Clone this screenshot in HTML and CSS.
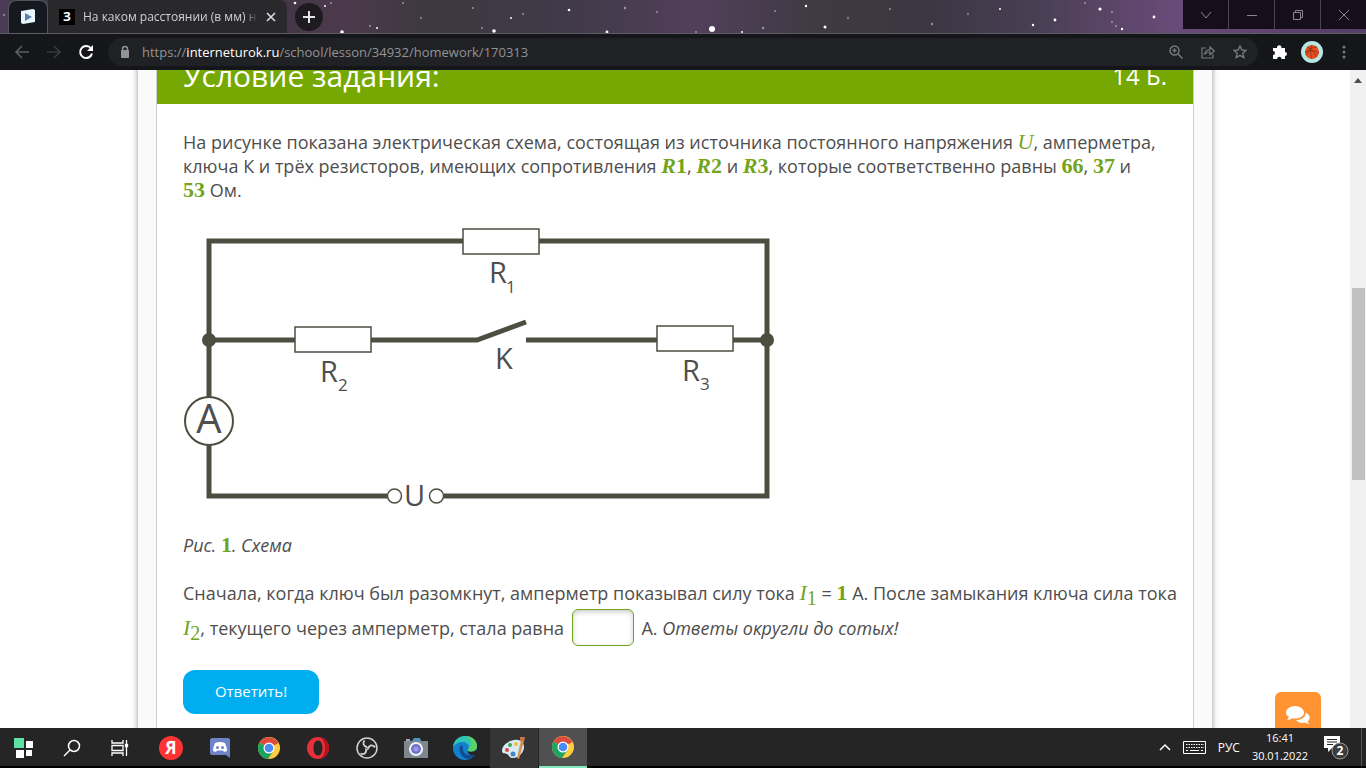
FILE: index.html
```html
<!DOCTYPE html>
<html lang="ru">
<head>
  <meta charset="UTF-8">
  <meta name="viewport" content="width=device-width, initial-scale=1.0">
  <title>Условие задания</title>
  <link rel="stylesheet" href="styles.css">
</head>
<body>

  <!-- tabs -->
  <header class="titlebar">
    <svg class="stars" viewBox="0 0 1366 33" preserveAspectRatio="xMidYMid slice" aria-hidden="true">
      <g fill="#fff">
        <circle cx="712" cy="29" r="3"/><circle cx="569" cy="10" r="1.3"/><circle cx="494" cy="31" r="1.8"/>
        <circle cx="511" cy="18" r="1"/><circle cx="607" cy="32" r="1.4"/><circle cx="825" cy="27" r="1.5"/>
        <circle cx="806" cy="6" r="1.2"/><circle cx="742" cy="32" r="1"/><circle cx="1100" cy="9" r="1.6"/>
        <circle cx="1055" cy="20" r="1.4"/><circle cx="1033" cy="25" r="1.2"/><circle cx="1154" cy="17" r="1.4"/>
        <circle cx="1122" cy="29" r="1.2"/><circle cx="1000" cy="9" r="1"/><circle cx="342" cy="32" r="1.8"/>
        <circle cx="295" cy="3" r="1.3"/><circle cx="377" cy="28" r="1"/><circle cx="325" cy="6" r="1"/>
      </g>
      <g fill="#fff" opacity=".45">
        <circle cx="4" cy="15" r="1"/><circle cx="403" cy="3" r="1"/><circle cx="421" cy="18" r="1"/>
        <circle cx="473" cy="8" r="1"/><circle cx="523" cy="14" r="1"/><circle cx="482" cy="28" r="1"/>
        <circle cx="625" cy="8" r="1.2"/><circle cx="657" cy="12" r="1"/><circle cx="696" cy="32" r="1"/>
        <circle cx="763" cy="28" r="1.2"/><circle cx="775" cy="11" r="1"/><circle cx="848" cy="18" r="1"/>
        <circle cx="890" cy="9" r="1"/><circle cx="932" cy="24" r="1.2"/><circle cx="968" cy="14" r="1"/>
        <circle cx="1085" cy="3" r="1"/><circle cx="1112" cy="12" r="1"/><circle cx="1112" cy="22" r="1"/>
        <circle cx="1116" cy="26" r="1"/><circle cx="331" cy="3" r="1"/><circle cx="370" cy="26" r="1"/>
      </g>
    </svg>
    <button class="tab tab-active" type="button" aria-label="interneturok">
      <svg width="16" height="18" viewBox="0 0 16 18"><path d="M1 3l12-2 2 1v12l-12 2-2-1z" fill="#e6f6fc"/><path d="M5 5l7 4-7 4z" fill="#5b82a6"/></svg>
    </button>
    <button class="tab tab-second" type="button">
      <span class="tab-icon">З</span>
      <span class="tab-text">На каком расстоянии (в мм) нуж</span>
      <svg width="10" height="10" viewBox="0 0 10 10"><path d="M1 1l8 8M9 1l-8 8" stroke="#ddd" stroke-width="1.6"/></svg>
    </button>
    <button class="tab-new" type="button" aria-label="Новая вкладка">
      <svg width="14" height="14" viewBox="0 0 14 14"><path d="M7 1v12M1 7h12" stroke="#e4e4e4" stroke-width="2"/></svg>
    </button>
    <div class="win-buttons">
      <button type="button" aria-label="Вкладки"><svg width="12" height="12" viewBox="0 0 12 12"><path d="M1 3l5 6 5-6"/></svg></button>
      <button type="button" aria-label="Свернуть"><svg width="12" height="12" viewBox="0 0 12 12"><path d="M1 6.5h10"/></svg></button>
      <button type="button" aria-label="Развернуть"><svg width="12" height="12" viewBox="0 0 12 12"><path d="M1.500 3.500h7v7h-7zM3.500 3.500v-2h7v7h-2"/></svg></button>
      <button type="button" aria-label="Закрыть"><svg width="12" height="12" viewBox="0 0 12 12"><path d="M1 1l10 10M11 1L1 11"/></svg></button>
    </div>
  </header>

  <!-- address bar -->
  <nav class="toolbar">
    <button class="tool-btn" type="button" aria-label="Назад"><svg width="16" height="16" viewBox="0 0 16 16"><path d="M15 8H2M8 2L2 8l6 6" fill="none" stroke="#5b5c5f" stroke-width="1.700"/></svg></button>
    <button class="tool-btn" type="button" aria-label="Вперёд"><svg width="16" height="16" viewBox="0 0 16 16"><path d="M1 8h13M8 2l6 6-6 6" fill="none" stroke="#38393c" stroke-width="1.700"/></svg></button>
    <button class="tool-btn" type="button" aria-label="Обновить"><svg width="16" height="16" viewBox="0 0 16 16"><path d="M13 4.500A6 6 0 1 0 14 9.500" fill="none" stroke="#fff" stroke-width="2"/><path d="M15 1v6H9z" fill="#fff"/></svg></button>
    <div class="omnibox">
      <svg width="10" height="14" viewBox="0 0 10 14"><rect x="1" y="5" width="8" height="8" rx="1" fill="#929397"/><path d="M2.500 6V4a2.500 2.500 0 0 1 5 0v2" fill="none" stroke="#929397" stroke-width="1.500"/></svg>
      <div class="url" role="textbox" contenteditable="true" spellcheck="false" aria-label="Адресная строка">https://<span class="url-host">interneturok.ru</span>/school/lesson/34932/homework/170313</div>
      <button class="tool-btn" type="button" aria-label="Масштаб"><svg width="14" height="14" viewBox="0 0 14 14" fill="none" stroke="#77787c" stroke-width="1.500"><circle cx="5.500" cy="5.500" r="4.500"/><path d="M9 9l4.500 4.500M3.500 5.500h4M5.500 3.500v4"/></svg></button>
      <button class="tool-btn" type="button" aria-label="Поделиться"><svg width="14" height="14" viewBox="0 0 14 14" fill="none" stroke="#77787c" stroke-width="1.200"><path d="M5 3H1v10h11V9"/><path d="M3.500 9.500C4 6 6 4.800 9 4.800V2l4.300 4L9 9.600V7C6.500 7 5 7.500 3.500 9.500z"/></svg></button>
      <button class="tool-btn" type="button" aria-label="В закладки"><svg width="14" height="14" viewBox="0 0 14 14"><path d="M7 1l1.800 4 4.200.4-3.200 2.900 1 4.200L7 10.300l-3.800 2.200 1-4.200L1 5.400 5.200 5z" fill="none" stroke="#77787c" stroke-width="1.400"/></svg></button>
    </div>
    <button class="tool-btn" type="button" aria-label="Расширения"><svg width="16" height="16" viewBox="0 0 16 16"><path d="M1 4h4a2.300 2.300 0 1 1 4.500 0H13v4a2 2 0 1 1 0 4v3H9.500a2.200 2.200 0 0 0-4.400 0H1v-4a2 2 0 0 0 0-4z" fill="#fff"/></svg></button>
    <button class="tool-btn" type="button" aria-label="Профиль"><svg width="22" height="22" viewBox="0 0 22 22"><circle cx="11" cy="11" r="11" fill="#b5e8e3"/><circle cx="11" cy="11" r="7" fill="#ea4f1d"/><path d="M4 11c5-2 10-2 14 1M11 4c-2 4-2 9 0 14M6 6c5 2 8 6 9 10M5 14c2-5 6-8 11-8" fill="none" stroke="#792c18" stroke-width=".7"/></svg></button>
    <button class="tool-btn" type="button" aria-label="Меню"><svg width="4" height="16" viewBox="0 0 4 16" fill="#77787c"><circle cx="2" cy="3" r="1.500"/><circle cx="2" cy="8" r="1.500"/><circle cx="2" cy="13" r="1.500"/></svg></button>
  </nav>

  <!-- page -->
  <div class="window">
    <main class="page">
      <div class="sheet">
        <section class="task">
          <div class="task-head">
            <h1>Условие задания:</h1>
            <span>14 Б.</span>
          </div>
          <form class="task-body">
            <p>На рисунке показана электрическая схема, состоящая из источника постоянного напряжения <i class="math">U</i>, амперметра, ключа К и трёх резисторов, имеющих сопротивления <b class="math"><i>R</i>1</b>, <b class="math"><i>R</i>2</b> и <b class="math"><i>R</i>3</b>, которые соответственно равны <b class="math">66</b>, <b class="math">37</b> и <b class="math">53</b>&nbsp;Ом.</p>

            <svg class="scheme" viewBox="183 225 592 288" role="img" aria-label="Схема">
              <g fill="none" stroke="#4d4e40" stroke-width="5">
                <path d="M209 397V241h254M539 241h228v255H444M209 444v52h178"/>
                <path d="M209 340h86M371 340h106l49-18M526 340h131M733 340h34"/>
              </g>
              <g fill="#fff" stroke="#4d4e40" stroke-width="1.500">
                <rect x="463" y="229" width="76" height="25"/>
                <rect x="295" y="327" width="76" height="25"/>
                <rect x="657" y="326" width="76" height="25"/>
                <circle cx="209" cy="421" r="24" stroke-width="2"/>
                <circle cx="394.500" cy="496" r="7"/>
                <circle cx="436.500" cy="496" r="7"/>
              </g>
              <circle cx="209" cy="340" r="7" fill="#4d4e40"/>
              <circle cx="767" cy="340" r="7" fill="#4d4e40"/>
              <g class="scheme-text">
                <text x="489" y="283">R</text><text class="scheme-sub" x="506" y="293">1</text>
                <text x="320" y="382">R</text><text class="scheme-sub" x="338" y="391">2</text>
                <text x="682" y="381">R</text><text class="scheme-sub" x="700" y="390">3</text>
                <text x="495" y="369">K</text>
                <text x="404" y="506">U</text>
                <text class="scheme-big" x="209" y="433">A</text>
              </g>
            </svg>

            <p class="caption"><i>Рис. <b class="math math-digit">1</b>. Схема</i></p>

            <p class="question">Сначала, когда ключ был разомкнут, амперметр показывал силу тока <span class="math"><i>I</i><sub>1</sub></span> = <b class="math">1</b> А. После замыкания ключа сила тока <span class="math"><i>I</i><sub>2</sub></span>, текущего через амперметр, стала равна <input class="answer" type="text" aria-label="Сила тока, А"> А. <i>Ответы округли до сотых!</i></p>

            <button class="submit" type="button">Ответить!</button>
          </form>
        </section>
      </div>
    </main>
    <div class="scrollbar">
      <svg width="8" height="5" viewBox="0 0 8 5"><path d="M0 5l4-5 4 5z" fill="#505050"/></svg>
      <div class="thumb"></div>
    </div>
    <button class="chat" type="button" aria-label="Чат">
      <svg width="24" height="20" viewBox="0 0 24 20" fill="#fff"><path d="M9 1C4 1 0 4 0 7.500c0 2 1 3.500 3 4.600L1 15c2 0 4-.6 5-1.700 7 1 12-1.600 12-5.800C18 4 14 1 9 1z"/><path d="M19.500 7.500c.5 4.500-4 7.500-9.500 7.500 2 3 6 3.500 9 2.600 1 .9 3 1.400 4.500 1.400l-2-2.500c3.500-2.600 3-7-2-9z"/></svg>
    </button>
  </div>

  <!-- taskbar -->
  <footer class="taskbar">
    <div class="task-left">
      <button type="button" aria-label="Пуск"><svg width="20" height="20" viewBox="0 0 20 20"><path fill="#5de2a5" d="M0 0h10v10H0z"/><path fill="#fff" d="M12 3h7v7h-7zM2 12h8v8H2zM12 12h6v6h-6z"/></svg></button>
      <button type="button" aria-label="Поиск"><svg width="18" height="18" viewBox="0 0 18 18" fill="none" stroke="#fff" stroke-width="1.500"><circle cx="11" cy="7" r="5.500"/><path d="M7 11l-6 6"/></svg></button>
      <button type="button" aria-label="Представление задач"><svg width="18" height="16" viewBox="0 0 18 16" fill="none" stroke="#fff" stroke-width="1.300"><path d="M1 0v3h11V0M1 16v-3h11v3M1 5.500h11v5H1zM15.500 0v16"/><path d="M14.500 4.500h2v2h-2z" fill="#fff"/></svg></button>
    </div>
    <div class="task-apps">
      <button type="button" aria-label="Яндекс"><svg width="24" height="24" viewBox="0 0 24 24"><circle cx="12" cy="12" r="12" fill="#f33"/><text class="ya" x="12" y="18">Я</text></svg></button>
      <button type="button" aria-label="Discord"><svg width="20" height="20" viewBox="0 0 20 20"><path d="M2 0h16a2 2 0 0 1 2 2v18l-4-3H2a2 2 0 0 1-2-2V2a2 2 0 0 1 2-2z" fill="#6f83c8"/><path d="M5 5q5-2 10 0 2 4 2 8l-3 1-1-1.500H7L6 14l-3-1q0-4 2-8z" fill="#fff"/><circle cx="7.500" cy="9.500" r="1.500" fill="#6f83c8"/><circle cx="12.500" cy="9.500" r="1.500" fill="#6f83c8"/></svg></button>
      <button type="button" aria-label="Chrome"><svg width="22" height="22" viewBox="0 0 22 22"><circle cx="11" cy="11" r="11" fill="#ffcd40"/><path d="M11 11L1.500 5.500a11 11 0 0 1 19 .5z" fill="#dd4b3e"/><path d="M11 11L1.500 5.500A11 11 0 0 0 10 22l5.500-8z" fill="#1da462"/><circle cx="11" cy="11" r="5.500" fill="#fff"/><circle cx="11" cy="11" r="4.300" fill="#4a8af4"/></svg></button>
      <button type="button" aria-label="Opera"><svg width="22" height="22" viewBox="0 0 22 22"><path fill-rule="evenodd" d="M11 0a11 11 0 1 0 0 22 11 11 0 0 0 0-22zM11 3.500c3 0 4.500 3.500 4.500 7.500S14 18.500 11 18.500 6.500 15 6.500 11 8 3.500 11 3.500z" fill="#e8303a"/><path d="M11 0a11 11 0 0 1 0 22c5-1 7-5 7-11S16 1 11 0z" fill="#b5121d"/></svg></button>
      <button type="button" aria-label="OBS"><svg width="22" height="22" viewBox="0 0 22 22" fill="none" stroke="#d2d2d2"><circle cx="11" cy="11" r="10" stroke-width="1.500"/><path d="M11 10C7 9 6.500 6 8.500 3.500M12 12c1-4 5-5 7-1.500M10 12c1 4-2 6-5.500 4.500" stroke-width="1.800"/><circle cx="11" cy="11.500" r="1.300"/></svg></button>
      <button type="button" aria-label="Камера"><svg width="24" height="20" viewBox="0 0 24 20"><path d="M0 3h8l2-3h6l1 3h7v17H0z" fill="#7d878e"/><path d="M9 3l1.500-3h5L17 3z" fill="#4b95c4"/><path d="M2 1h4v2H2z" fill="#a0a9af"/><circle cx="12" cy="11" r="7" fill="#f4f4f8"/><circle cx="12" cy="11" r="5" fill="#6c74c9"/><circle cx="12" cy="11" r="2.500" fill="#a394e5"/></svg></button>
      <button type="button" aria-label="Edge"><svg width="24" height="24" viewBox="0 0 24 24"><circle cx="12" cy="12" r="12" fill="#1380cf"/><path d="M0 11C1 4 6 0 12 0c8 0 12 6 12 10 0 5-5 7-9 5-1-1 1-1 1-4 0-3-3-5-7-5-4 0-7 2-9 5z" fill="#31c6b2"/><path d="M14 0c7 1 10 6 10 10 0 5-5 7-9 5-1-1 1-1 1-4 4-2 3-7-2-11z" fill="#5bd363"/><path d="M7 10c-2 6 2 13 9 13 3-1 5-3 6-5-6 3-13 0-12-6 0-2-2-3-3-2z" fill="#114b93"/><path d="M15 15c4 2 7 0 9-2l-1 6c-5 1-9-1-8-4z" fill="#252525"/></svg></button>
      <button class="app-open" type="button" aria-label="Paint"><svg width="24" height="24" viewBox="0 0 24 24"><path d="M12 4c6-1 10 2 10 7s-5 11-11 11c-4 0-4-3-6-4s-5 0-5-3C0 9 6 5 12 4z" fill="#dceaf5"/><circle cx="5" cy="14" r="2" fill="#dc4a42"/><circle cx="8" cy="9" r="2" fill="#3fa457"/><circle cx="14" cy="8" r="2" fill="#f4bd39"/><circle cx="11" cy="18" r="2.500" fill="#3f86ca"/><path d="M19 4l-4 18 2 1 5-18z" fill="#d49452"/><path d="M18 1l5 0-1 5-4-1z" fill="#c87649"/></svg></button>
      <button class="app-current" type="button" aria-label="Chrome"><svg width="22" height="22" viewBox="0 0 22 22"><circle cx="11" cy="11" r="11" fill="#ffcd40"/><path d="M11 11L1.500 5.500a11 11 0 0 1 19 .5z" fill="#dd4b3e"/><path d="M11 11L1.500 5.500A11 11 0 0 0 10 22l5.500-8z" fill="#1da462"/><circle cx="11" cy="11" r="5.500" fill="#fff"/><circle cx="11" cy="11" r="4.300" fill="#4a8af4"/></svg></button>
    </div>
    <div class="tray">
      <svg width="12" height="8" viewBox="0 0 12 8"><path d="M1 7l5-5 5 5" fill="none" stroke="#fff" stroke-width="1.500"/></svg>
      <svg width="23" height="13" viewBox="0 0 23 13" fill="none" stroke="#fff"><path d="M.5.5h22v12H.5z"/><path d="M3 3.500h18M3 6.500h18" stroke-dasharray="1.500 1"/><path d="M3 9.500h2M7 9.500h9M18 9.500h2"/></svg>
      <span class="lang">РУС</span>
      <div class="clock"><span>16:41</span><span>30.01.2022</span></div>
      <button class="notify" type="button" aria-label="Уведомления">
        <svg width="26" height="26" viewBox="0 0 26 26"><path d="M1 2h16v12H9l-4 4v-4H1z" fill="#fff"/><path d="M4 5.500h10M4 8h10M4 10.500h6" stroke="#252525"/><circle cx="17" cy="17" r="8" fill="#3c3c3c" stroke="#999"/><text class="count" x="17" y="21">2</text></svg>
      </button>
      <span class="peek"></span>
    </div>
  </footer>

</body>
</html>
```
FILE: styles.css
```css
* {
  padding: 0;
  margin: 0;
  box-sizing: border-box;
}
body {
  display: flex;
  flex-direction: column;
  height: 100vh;
  overflow: hidden;
  background-color: #fff;
  font-family: "Open Sans", "Noto Sans", sans-serif;
}
button {
  display: flex;
  align-items: center;
  justify-content: center;
  border: 0;
  background: none;
  font-family: inherit;
  cursor: pointer;
}
svg {
  flex: none;
}

/* tabs */
.titlebar {
  position: relative;
  display: flex;
  flex: none;
  height: 34px;
  padding-left: 8px;
  border-bottom: 1px solid #5d5c62;
  background: linear-gradient(90deg, #4b3b56 0%, #352e3d 12%, #4c3a4c 25%, #3c3840 32%, #413a49 42%, #513f5a 51%, #3e3a42 60%, #3a3742 68%, #493f54 76%, #6a4a78 86%, #553e66 100%);
}
.stars {
  position: absolute;
  top: 0;
  left: 0;
  width: 100%;
  height: 100%;
}
.tab {
  position: relative;
  height: 33px;
}
.tab-active {
  width: 40px;
  border: 1px solid #55555c;
  border-bottom: 0;
  border-radius: 8px 8px 0 0;
  background-color: #171920;
}
.tab-second {
  gap: 8px;
  width: 239px;
  padding: 0 11px;
  border-radius: 0 8px 0 0;
  background-color: #29282b;
}
.tab-icon {
  width: 16px;
  background-color: #000;
  color: #fff;
  font-size: 12px;
  font-weight: 700;
  line-height: 16px;
}
.tab-text {
  flex: 1;
  overflow: hidden;
  color: #d0d0d2;
  font-size: 12px;
  text-align: left;
  white-space: nowrap;
  -webkit-mask-image: linear-gradient(90deg, #000 92%, transparent);
  mask-image: linear-gradient(90deg, #000 92%, transparent);
}
.tab-new {
  position: relative;
  width: 28px;
  height: 28px;
  margin: 3px 8px;
  border-radius: 50%;
  background-color: #1d1b20;
}
.win-buttons {
  position: relative;
  display: flex;
  gap: 1px;
  height: 29px;
  margin-left: auto;
  background-color: #4d4455;
}
.win-buttons button {
  width: 45px;
  background-color: #170e1c;
}
.win-buttons svg {
  fill: none;
  stroke: #8b868e;
}

/* address bar */
.toolbar {
  display: flex;
  flex: none;
  align-items: center;
  height: 36px;
  padding: 0 6px;
  background-color: #141619;
}
.tool-btn {
  width: 32px;
  height: 28px;
}
.omnibox {
  display: flex;
  flex: 1;
  align-items: center;
  height: 28px;
  margin: 0 6px;
  padding: 0 2px 0 12px;
  border-radius: 14px;
  background-color: #202124;
}
.url {
  flex: 1;
  padding-left: 12px;
  color: #929397;
  font-size: 13px;
  line-height: 20px;
  white-space: nowrap;
}
.url-host {
  color: #fff;
}

/* page */
.window {
  position: relative;
  display: flex;
  flex: 1;
  min-height: 0;
}
.page {
  flex: 1;
  overflow: hidden;
}
.sheet {
  max-width: 1074px;
  margin: 0 auto;
  padding: 0 18px;
  background-color: #fafafa;
  box-shadow: 0 0 6px #8f8f9b;
}
.task {
  border: 1px solid #cfcfcf;
  border-width: 0 1px;
  background-color: #fff;
}
.task-head {
  display: flex;
  align-items: center;
  justify-content: space-between;
  height: 58px;
  margin-top: -24px;   /* scrolled under the toolbar */
  padding: 0 26px;
  background-color: #76a803;
  color: #fff;
  font-size: 24px;
}
.task-head h1 {
  font-size: 30px;
  font-weight: 400;
}
.task-body {
  padding: 26px 16px 60px 26px;
  color: #4e4e4e;
  font-size: 18px;
  line-height: 24px;
}
.math {
  color: #72a41c;
  font-family: "Liberation Serif", serif;
  font-size: 22px;
  line-height: 1;
}
.math-digit {
  font-style: normal;
}
.math sub {
  font-size: 20px;
  line-height: 0;
}
.scheme {
  display: block;
  width: 592px;
  max-width: 100%;
  margin: 23px 0 20px;
}
.scheme-text {
  fill: #4e4e4e;
  font-size: 29px;
}
.scheme-sub {
  font-size: 17px;
}
.scheme-big {
  font-size: 40px;
  text-anchor: middle;
}
.question {
  margin: 20px 0 24px;
  line-height: 32px;
}
.answer {
  width: 62px;
  height: 37px;
  margin: 0 3px;
  border: 1px solid #72a41c;
  border-radius: 6px;
  box-shadow: inset 0 2px 5px #ccc;
  font-size: 22px;
  text-align: center;
}
.submit {
  width: 136px;
  height: 44px;
  padding-bottom: 3px;
  border-radius: 12px;
  background-color: #00aeef;
  color: #fff;
  font-size: 15px;
}
.scrollbar {
  display: flex;
  flex-direction: column;
  align-items: center;
  width: 16px;
  padding-top: 8px;
  background-color: #f1f1f1;
}
.thumb {
  width: 13px;
  height: 192px;
  margin-top: 205px;
  background-color: #c1c1c1;
}
.chat {
  position: absolute;
  right: 45px;
  bottom: -10px;
  width: 46px;
  height: 46px;
  border-radius: 6px;
  background-color: #ff9231;
}

/* taskbar */
.taskbar {
  position: relative;
  display: flex;
  flex: none;
  height: 40px;
  border-bottom: 2px solid #000;
  background-color: #252525;
}
.task-left {
  display: flex;
  margin-right: 3px;
}
.task-apps {
  display: flex;
  gap: 1px;
}
.task-left button,
.task-apps button {
  width: 48px;
  height: 40px;
}
.app-open {
  background-color: #353535;
}
.task-apps .app-current {
  border-bottom: 2px solid #82e8bd;
  background-color: #505050;
}
.ya,
.count {
  fill: #fff;
  font-size: 17px;
  font-weight: 700;
  text-anchor: middle;
}
.count {
  font-size: 12px;
}
.tray {
  display: flex;
  align-items: center;
  gap: 12px;
  margin-left: auto;
  padding-right: 4px;
  color: #fff;
  font-size: 11px;
}
.lang {
  font-size: 12px;
}
.clock {
  display: flex;
  flex-direction: column;
  align-items: center;
  line-height: 18px;
}
.notify {
  margin-left: 3px;
}
.peek {
  align-self: stretch;
  width: 1px;
  background-color: #555;
}
```
